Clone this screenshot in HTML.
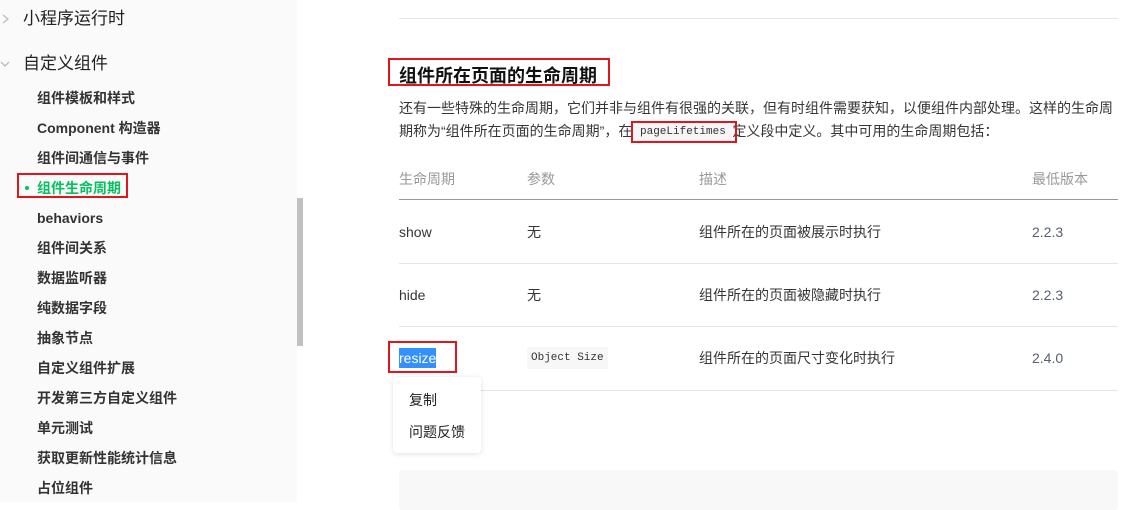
<!DOCTYPE html>
<html><head><meta charset="utf-8"><style>
*{margin:0;padding:0;box-sizing:border-box}
body{width:1146px;height:502px;overflow:hidden;background:#fff;font-family:"Liberation Sans","Noto Sans CJK SC",sans-serif;position:relative;color:#333}
.abs{position:absolute;white-space:nowrap;line-height:20px}
.side{position:absolute;left:0;top:0;width:297px;height:502px;background:#fafafa}
.sb{position:absolute;left:297px;top:198px;width:6px;height:148px;background:#c1c1c1}
.h1{font-size:17px;color:#222;left:23px;line-height:22px}
.it{font-size:14px;font-weight:bold;color:#333;left:37px}
.line{position:absolute;left:399px;width:719px;height:1px;background:#e5e5e5}
.th{font-size:14px;color:#999;top:169px}
.td{font-size:14px;color:#353535}
.ver{color:#586070}
.red{position:absolute;border:2px solid #e0161d}
</style></head><body>
<div class="side"></div>
<div class="sb"></div>
<svg class="abs" style="left:0;top:12px" width="12" height="14"><path d="M3 3 L8 7 L3 11" fill="none" stroke="#bbb" stroke-width="1.3"/></svg>
<div class="abs h1" style="top:8px">小程序运行时</div>
<svg class="abs" style="left:0;top:60px" width="14" height="10"><path d="M1 2 L5 6 L9 2" fill="none" stroke="#bbb" stroke-width="1.3"/></svg>
<div class="abs h1" style="top:53px">自定义组件</div>
<div class="abs it" style="top:88px">组件模板和样式</div>
<div class="abs it" style="top:118px">Component 构造器</div>
<div class="abs it" style="top:148px">组件间通信与事件</div>
<div class="abs" style="left:25px;top:186px;width:4px;height:4px;border-radius:2px;background:#07c160"></div>
<div class="abs it" style="top:178px;color:#07c160">组件生命周期</div>
<div class="red" style="left:17px;top:173px;width:111px;height:25px"></div>
<div class="abs it" style="top:208px">behaviors</div>
<div class="abs it" style="top:238px">组件间关系</div>
<div class="abs it" style="top:268px">数据监听器</div>
<div class="abs it" style="top:298px">纯数据字段</div>
<div class="abs it" style="top:328px">抽象节点</div>
<div class="abs it" style="top:358px">自定义组件扩展</div>
<div class="abs it" style="top:388px">开发第三方自定义组件</div>
<div class="abs it" style="top:418px">单元测试</div>
<div class="abs it" style="top:448px">获取更新性能统计信息</div>
<div class="abs it" style="top:478px">占位组件</div>

<div class="line" style="top:18px"></div>
<div class="abs" style="left:399px;top:63px;font-size:18px;font-weight:bold;color:#111;line-height:26px">组件所在页面的生命周期</div>
<div class="red" style="left:388px;top:58px;width:222px;height:28px"></div>
<div class="abs" style="left:399px;top:98px;font-size:14px;color:#353535">还有一些特殊的生命周期，它们并非与组件有很强的关联，但有时组件需要获知，以便组件内部处理。这样的生命周</div>
<div class="abs" style="left:399px;top:121px;font-size:14px;color:#353535">期称为“组件所在页面的生命周期”，在<span style="display:inline-block;width:100px"></span>定义段中定义。其中可用的生命周期包括：</div>
<div class="abs" style="left:634px;top:123px;font-family:'Liberation Mono',monospace;font-size:11px;background:#f5f5f5;padding:0 6px;line-height:18px">pageLifetimes</div>
<div class="red" style="left:631px;top:121px;width:106px;height:22px"></div>

<div class="abs th" style="left:399px">生命周期</div>
<div class="abs th" style="left:527px">参数</div>
<div class="abs th" style="left:699px">描述</div>
<div class="abs th" style="left:1032px">最低版本</div>
<div class="line" style="top:199px;background:#999;height:1px"></div>

<div class="abs td" style="left:399px;top:222px">show</div>
<div class="abs td" style="left:527px;top:222px">无</div>
<div class="abs td" style="left:699px;top:222px">组件所在的页面被展示时执行</div>
<div class="abs td ver" style="left:1032px;top:222px">2.2.3</div>
<div class="line" style="top:263px"></div>
<div class="abs td" style="left:399px;top:285px">hide</div>
<div class="abs td" style="left:527px;top:285px">无</div>
<div class="abs td" style="left:699px;top:285px">组件所在的页面被隐藏时执行</div>
<div class="abs td ver" style="left:1032px;top:285px">2.2.3</div>
<div class="line" style="top:326px"></div>
<div class="abs td" style="left:399px;top:348px;background:#3390ff;color:#fff;line-height:20px">resize</div>
<div class="red" style="left:388px;top:341px;width:69px;height:32px"></div>
<div class="abs" style="left:527px;top:347px;background:#f7f7f7;font-family:'Liberation Mono',monospace;font-size:11px;padding:0 4px;line-height:22px;color:#333">Object Size</div>
<div class="abs td" style="left:699px;top:348px">组件所在的页面尺寸变化时执行</div>
<div class="abs td ver" style="left:1032px;top:348px">2.4.0</div>
<div class="line" style="top:390px"></div>

<div class="abs" style="left:393px;top:377px;width:88px;height:76px;background:#fff;border-radius:4px;box-shadow:0 1px 6px rgba(0,0,0,.12)"></div>
<div class="abs" style="left:409px;top:390px;font-size:14px;color:#222">复制</div>
<div class="abs" style="left:409px;top:422px;font-size:14px;color:#222">问题反馈</div>

<div class="abs" style="left:399px;top:470px;width:719px;height:40px;background:#f8f8f8;border-radius:3px"></div>
</body></html>
